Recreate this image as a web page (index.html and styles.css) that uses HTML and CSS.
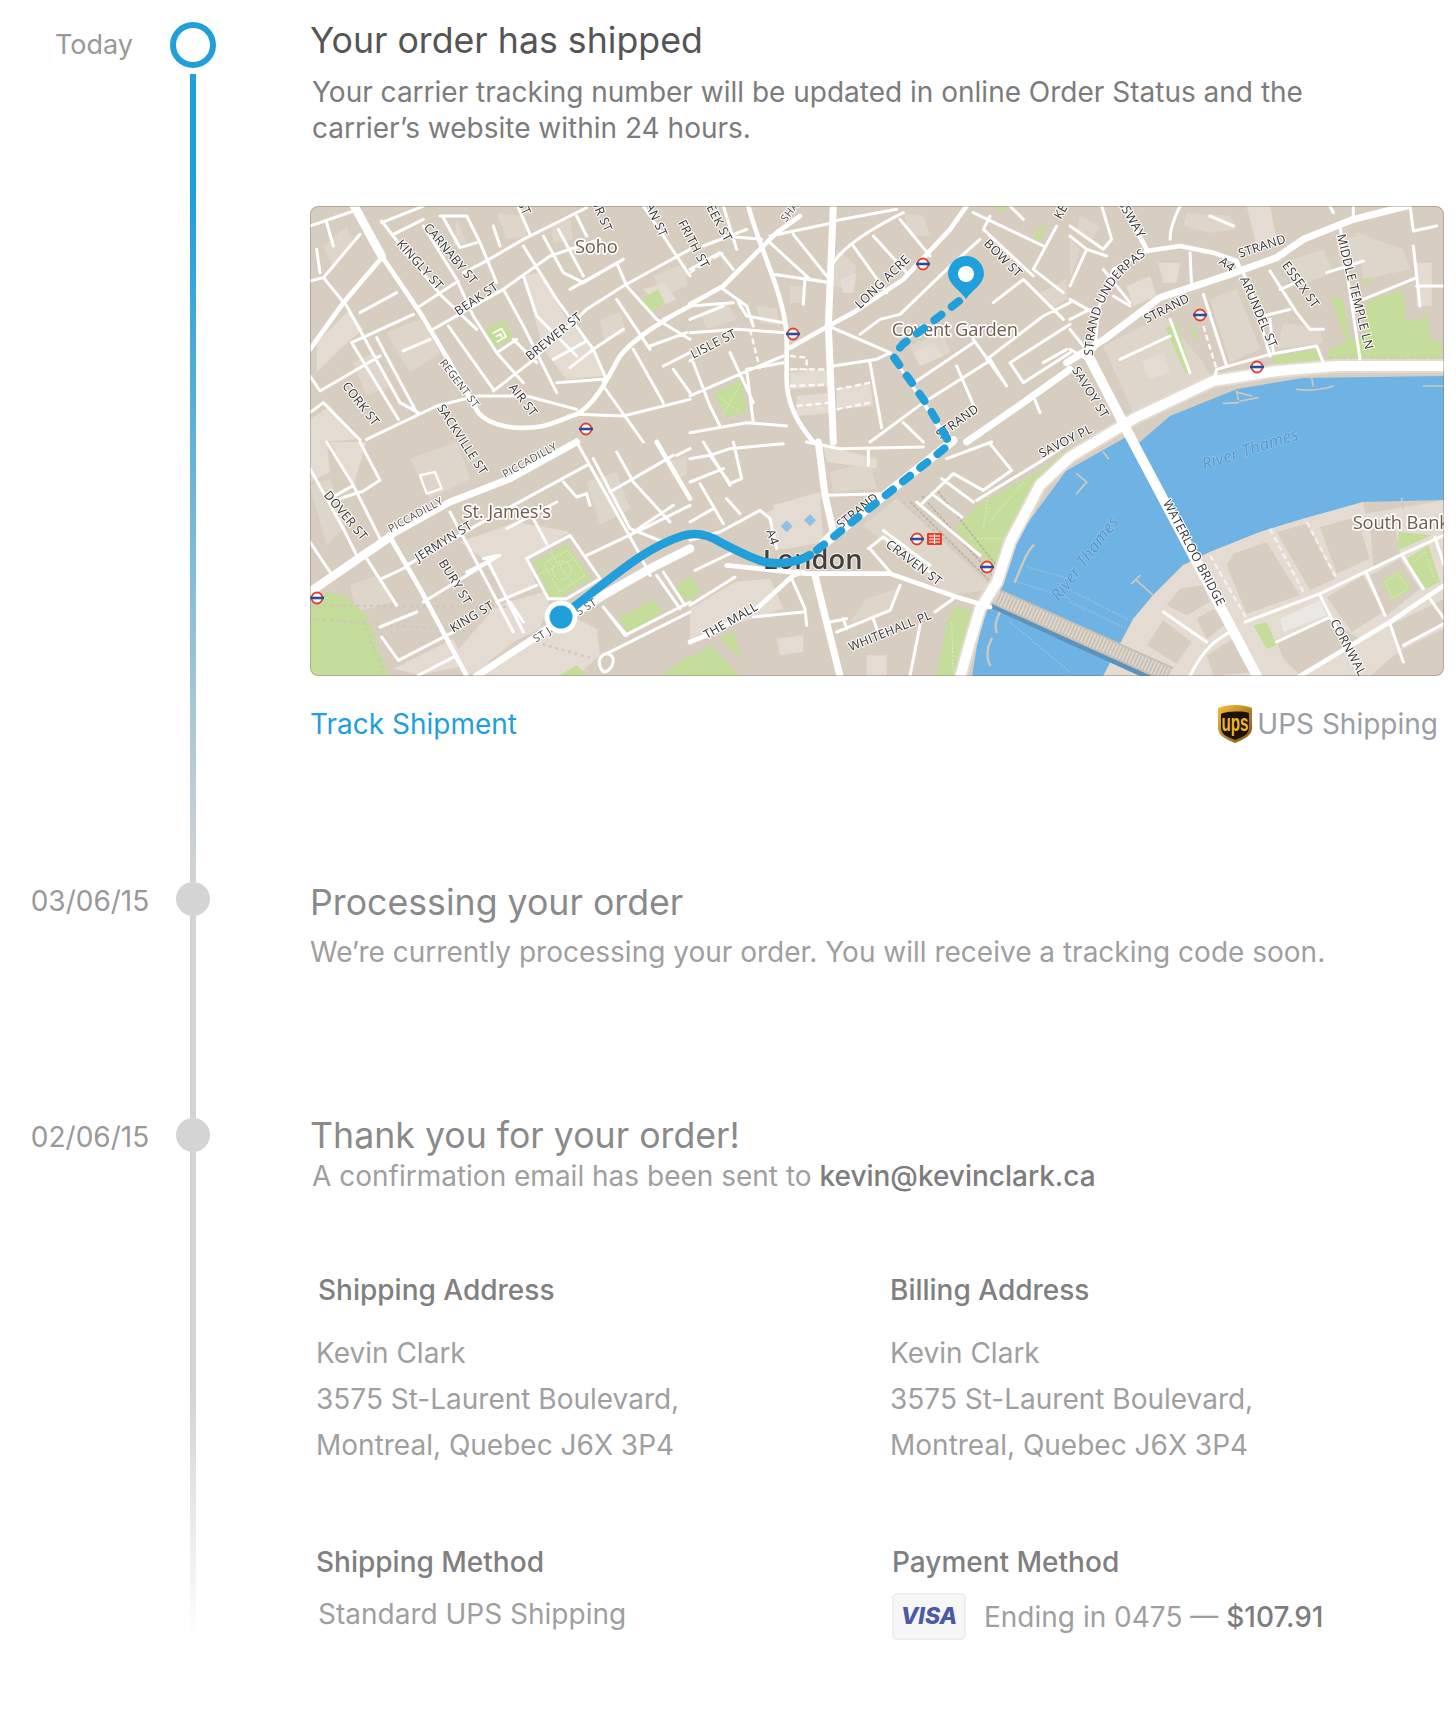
FILE: index.html
```html
<!DOCTYPE html>
<html lang="en">
<head>
    <meta charset="UTF-8">
    <meta name="viewport" content="width=device-width, initial-scale=1.0">
    <title>Order Status</title>
    <link rel="stylesheet" href="styles.css">
</head>
<body>
    <div class="timeline">

        <div class="step step-shipped">
            <div class="date date-today">Today</div>
            <div class="rail">
                <span class="ring"></span>
                <span class="line line-active"></span>
            </div>
            <div class="content">
                <h2 class="title title-dark">Your order has shipped</h2>
                <p class="text text-dark">Your carrier tracking number will be updated in online Order Status and the carrier’s website within 24 hours.</p>

                <div class="map">
                    <svg class="map-svg" viewBox="0 0 1134 470" width="1134" height="470">
                        <!-- each tile is drawn at 3x, in its own coordinates -->
                        <g transform="scale(.33333)">
                            <path class="tone" d="M40,120 L110,60 L130,110 L70,190Z M230,380 L330,340 L390,440 L300,500Z M560,20 L640,30 L650,90 L590,100Z M870,340 L930,320 L950,380 L880,400Z M1030,210 L1130,170 L1130,240 L1060,270Z M130,470 L190,440 L240,540 L170,570Z M440,40 L470,110 L430,120Z M720,50 L780,40 L790,100 L730,110Z"/>
                            <path class="light" d="M20,500 L100,420 L160,370 L120,310 L20,410Z M640,210 L690,200 L770,340 L860,440 L880,510 L770,520 L700,430Z M0,640 L60,600 L140,700 L0,710Z M1000,250 L1060,230 L1100,280 L1050,300Z"/>
                            <path class="park" d="M525,375 L580,340 L610,395 L550,430Z M990,280 L1045,250 L1065,290 L1025,320Z M775,230 L785,225 L790,240Z"/>
                            <path class="park-in" d="M548,382 L575,368 L588,392 L560,408 M558,392 L572,384 L576,394"/>
                        </g>
                        <g transform="translate(380 0) scale(.33333)">
                            <path class="tone" d="M300,240 L340,240 L340,290 L300,290Z M440,130 L500,180 L470,250 L430,240Z M640,20 L700,30 L720,90 L660,90Z M660,420 L760,380 L780,440 L690,480Z M1050,260 L1130,220 L1130,280 L1080,310Z M30,320 L110,290 L140,340 L50,370Z M200,300 L260,310 L270,360 L210,350Z"/>
                            <path class="light" d="M300,500 L420,490 L420,540 L300,550Z M440,550 L540,530 L550,600 L440,610Z M670,440 L730,410 L760,450 L690,480Z M450,220 L500,200 L490,260 L460,260Z M320,570 L420,560 L420,620 L320,630Z"/>
                            <path class="park" d="M70,565 L155,520 L170,615 L110,635Z M1030,85 L1070,50 L1055,100 L1040,105Z M920,0 L950,0 L935,25Z"/>
                            <path class="park-line" d="M85,570 L150,620 M150,535 L100,625"/>
                        </g>
                        <g transform="translate(760 0) scale(.33333)">
                            <path class="tone" d="M30,30 L90,60 L60,110 L20,80Z M350,20 L480,30 L500,70 L420,80 L340,60Z M860,80 L1000,130 L1020,190 L880,220Z M800,100 L880,90 L880,170 L810,180Z M640,170 L760,130 L790,200 L680,240Z M100,420 L280,330 L400,470 L420,510 L190,620Z M420,280 L500,250 L570,430 L480,470Z M640,350 L750,370 L760,410 L620,430Z M0,100 L30,130 L0,220Z"/>
                            <path class="light" d="M215,465 L280,440 L300,500 L235,520Z M170,240 L240,210 L260,270 L190,300Z M265,170 L330,170 L320,230 L280,230Z M530,0 L600,0 L620,100 L560,120Z M1040,170 L1085,170 L1085,300 L1040,300Z"/>
                            <path class="park" d="M610,450 L745,430 L750,470 L610,485Z M780,270 L820,280 L840,400 L885,390 L890,285 L1000,250 L1010,345 L1060,340 L1065,300 L1080,400 L1115,405 L1115,460 L770,462 L775,430 L830,410Z M285,365 L320,350 L365,500 L345,500Z M360,340 L385,395 L370,400Z M875,220 L915,215 L880,240Z"/>
                            <path class="dots" d="M780,455 L1115,455 M440,515 L600,480"/>
                        </g>
                        <g transform="translate(0 236) scale(.33333)">
                            <path class="tone" d="M0,130 L60,110 L110,250 L50,310Z M300,50 L440,0 L480,110 L360,170 L320,90Z M830,120 L920,90 L960,200 L870,250Z M1070,60 L1130,40 L1130,100 L1090,110Z M120,430 L200,400 L250,480 L140,510Z"/>
                            <path class="light" d="M450,300 L620,240 L780,270 L650,350 L680,430 L590,470 L520,350Z M560,490 L700,450 L720,470 L690,560 L610,600 L500,690 L470,700 L430,640Z M250,680 L430,590 L470,670 L330,700Z M0,0 L50,0 L60,90 L0,120Z M60,0 L170,0 L130,130Z M520,702 L700,580 L800,530 L860,560 L870,640 L800,702Z"/>
                            <path class="park" d="M0,500 L50,450 L100,460 L170,520 L235,700 L0,700Z M670,360 L770,305 L845,410 L745,470 L720,470Z M925,525 L1030,475 L1060,510 L955,575Z M1090,440 L1140,405 L1140,485 L1115,460Z M1050,700 L1140,640 L1140,700Z M745,702 L800,670 L830,702Z"/>
                            <path class="dots" d="M0,490 L610,495 M0,530 L500,570 M640,590 L850,650 M160,540 L220,690"/>
                            <path class="park-line" d="M700,365 L775,325 L825,400 L750,450Z M720,330 L800,440 M680,400 L790,350"/>
                            <circle class="park-line" cx="755" cy="385" r="28"/>
                        </g>
                        <g transform="translate(380 236) scale(.33333)">
                            <path class="tone" d="M620,170 L910,440 L780,460 L520,250Z M420,90 L540,60 L560,140 L430,150Z M530,470 L620,440 L590,510 L480,540Z"/>
                            <path class="light" d="M230,210 L390,170 L400,300 L290,320 L260,320Z M0,500 L135,420 L240,410 L280,500 L0,590Z M400,10 L560,50 L560,80 L410,60Z M250,190 L390,150 L395,170 L250,205Z M530,640 L590,640 L590,702 L530,702Z M260,590 L340,580 L340,630 L270,640Z"/>
                            <path class="park" d="M795,260 L860,190 L1060,80 L1130,20 L1140,70 L1040,150 L960,280 L920,370 L870,340Z M740,702 L770,540 L800,490 L850,510 L820,640 L800,702Z M0,405 L35,450 L0,475Z M0,650 L60,610 L150,702 L0,702Z M90,590 L130,565 L155,650Z"/>
                            <path class="pond" d="M272,253 L290,235 L308,253 L290,271Z M342,235 L360,217 L378,235 L360,253Z"/>
                            <path class="park-line" d="M900,130 L880,260 M840,290 L960,290 M1000,120 L900,240 M785,540 L790,690"/>
                            <path class="dots" d="M640,180 L880,400 M680,170 L920,400"/>
                        </g>
                        <path class="water" d="M830,236 L860,210 L927,183 L993,172 L1134,170 L1134,294 L1053,296 L993,313 L950,326 L900,346 L873,359 L843,389 L823,413 L793,470 L662,470 L667,440 L683,372 L706,333 L756,265 L818,230Z"/>
                        <g transform="translate(760 236) scale(.33333)">
                            <path class="light" d="M100,702 L190,530 L250,460 L340,370 L420,330 L570,270 L700,230 L880,180 L885,215 L1122,175 L1122,702Z"/>
                            <path class="block" d="M470,370 L490,335 L590,300 L670,430 L690,460 L530,515Z M620,270 L710,245 L795,410 L720,445Z M750,255 L860,225 L900,350 L800,395Z M290,490 L330,440 L400,430 L420,480 L350,520Z M380,530 L430,500 L470,545 L410,590Z M230,610 L280,535 L365,600 L320,665Z M770,465 L880,400 L940,510 L845,570Z M960,550 L1122,470 L1122,540 L990,620Z M620,600 L770,530 L870,590 L850,620 L690,700 L640,650Z M1000,620 L1122,560 L1122,702 L900,702 L960,650Z M900,400 L990,350 L1050,440 L950,520Z M410,640 L490,590 L550,690 L430,702Z M900,240 L970,225 L990,340 L910,380Z"/>
                            <path class="plaza" d="M630,530 L750,475 L770,520 L640,570Z"/>
                            <path class="park" d="M550,550 L590,540 L620,610 L590,620Z M935,415 L990,385 L1025,440 L965,478Z M1010,350 L1075,310 L1110,420 L1060,445Z M985,270 L1085,280 L985,325Z"/>
                            <path class="park-line" d="M945,420 L985,395 L1015,440 L968,468Z M1030,360 L1065,330 L1095,415"/>
                        </g>
                        <!-- boats, piers and the railway bridge over the water -->
                        <g transform="translate(380 236) scale(.33333)">
                            <path class="pier" d="M975,420 C1000,360 1010,330 1030,310 M905,590 C890,620 890,650 900,670 M930,510 C915,540 915,560 920,570"/>
                            <path class="chain" d="M1010,375 L1140,410 M985,420 L1140,470 M960,540 L1140,690"/>
                        </g>
                        <g transform="translate(760 0) scale(.33333)">
                            <path class="pier pier-thin" d="M680,550 C720,555 760,550 790,540 M460,592 L505,590 M510,585 L565,575 M1060,540 L1122,540 M725,515 L730,540 M500,555 L505,580 M505,560 L545,570"/>
                        </g>
                        <g transform="translate(760 236) scale(.33333)">
                            <path class="pier pier-thin" d="M20,95 L50,120 L20,155 M100,30 L115,50 M185,425 L210,400 M200,415 L250,460 M995,170 L1000,200"/>
                            <path class="chain" d="M0,445 L180,535 M0,480 L170,560"/>
                        </g>
                        <path class="rail-shadow" d="M684,394 L760,429 L857,473"/>
                        <path class="rail-bridge" d="M680,388 L760,424 L860,469"/>
                        <path class="rail-ties" d="M680,388 L760,424 L860,469"/>
                        <path class="rail-tracks" d="M600,296 L690,385 M612,290 L690,378 M625,282 L695,370"/>

                        <path class="quay" d="M825,212 L760,251 L730,279 L700,336 L687,376 L670,403 L660,436 L650,472 M825,212 L903,175 L967,165 L1027,160 L1134,160"/>
                        <path class="road-xl" d="M825,212 L760,251 L730,279 L700,336 L687,376 L670,403 L660,436 L650,472 M825,212 L903,175 L967,165 L1027,160 L1134,160"/>
                        <path class="road-xl" d="M780,153 L823,236 L947,470"/>

                        <!-- roads and street names, tile by tile -->
                        <g transform="scale(.33333)">
                            <path class="r" d="M0,60 L130,15 M40,215 L150,85 M0,225 L40,215 L110,300 M215,50 L340,0 M250,85 L340,40 M215,45 L280,130 L395,270 L500,370 M340,60 L440,220 L490,330 L560,440 L640,530 M30,555 L210,450 M125,410 L310,325 M360,375 L580,250 L720,150 L870,100 M460,200 L520,170 L640,100 L780,30 L830,5 M150,320 L260,260 M330,300 L445,225 M110,300 L270,590 L325,620 M125,410 L265,640 M170,700 L380,600 L500,570 L650,570 L800,610 M415,360 L550,550 M550,555 L660,470 L830,310 L940,240 L1140,130 M800,625 L940,630 L1140,580 M640,120 L740,280 L850,430 L885,510 L880,530 M740,530 L880,520 M580,250 L640,360 L740,560 M640,210 L680,330 L800,450 M1040,60 L1140,210 M920,170 L950,240 L1040,340 L1140,400 M700,90 L760,200 L820,230 L940,160 M780,250 L940,160 M745,70 L820,210 M550,60 L570,120 M800,30 L830,90 M625,5 L660,85 M390,30 L470,30 L510,110 L560,230 M400,35 L450,125 L500,110 M730,460 L830,405 M780,485 L850,430 L940,370 M880,540 L1000,708 M970,430 L1060,590 M920,280 L1020,430 M280,435 L360,400 M0,620 L40,590 L150,702 M560,440 L620,400 M1000,0 L1040,60 M1140,300 L1060,340 M200,395 L320,620 M1020,420 L1130,380 M1060,480 L1140,440 M1090,490 L1140,560 M0,510 L30,555 M50,50 L70,120 M20,130 L30,200 M610,400 L680,470"/>
                            <path class="r-m" d="M215,150 L330,320 L420,470 L505,620 M0,430 L100,290 L215,155 M505,620 C540,660 620,675 700,660 C740,650 780,630 800,625 C860,590 890,520 930,450 C970,400 1060,340 1140,300"/>
                            <path class="r-xl" d="M130,-5 L215,150"/>
                            <text class="place" x="795" y="140">Soho</text>
                            <text class="lbl" transform="translate(258 115) rotate(48)">KINGLY ST</text>
                            <text class="lbl" transform="translate(340 65) rotate(50)">CARNABY ST</text>
                            <text class="lbl" transform="translate(445 330) rotate(-34)">BEAK ST</text>
                            <text class="lbl" transform="translate(660 465) rotate(-39)">BREWER ST</text>
                            <text class="lbl lbl-s" transform="translate(388 470) rotate(53)">REGENT ST</text>
                            <text class="lbl" transform="translate(595 545) rotate(52)">AIR ST</text>
                            <text class="lbl" transform="translate(95 540) rotate(52)">CORK ST</text>
                            <text class="lbl" transform="translate(380 605) rotate(57)">SACKVILLE ST</text>
                            <text class="lbl lbl-end" transform="translate(885 80) rotate(66)">UR ST</text>
                            <text class="lbl lbl-end" transform="translate(1050 95) rotate(66)">AN ST</text>
                            <text class="lbl lbl-end" transform="translate(640 30) rotate(66)">ST</text>
                        </g>
                        <g transform="translate(380 0) scale(.33333)">
                            <path class="r" d="M415,360 L600,440 M430,45 L620,10 M240,90 L430,50 M425,180 C450,130 520,80 640,20 M310,85 L410,210 M240,110 L360,220 L420,230 M250,205 L420,230 M345,215 L340,295 M490,120 L590,260 M550,90 L650,200 M630,40 L720,150 M510,385 L570,340 L630,325 L770,190 L870,100 M850,20 L1060,120 M900,30 L880,70 M1030,190 L1120,260 M1000,220 L910,290 M1100,60 L1030,190 M880,70 L1030,210 M1000,220 L1120,340 M1140,290 L1060,330 L890,460 M680,525 L850,410 M540,708 L700,590 L890,470 M900,460 L950,540 M850,400 L950,540 M430,480 L560,460 L600,440 M540,470 L575,665 M0,380 L140,370 L290,380 M0,465 L50,430 M0,300 L130,290 M100,250 L170,300 L190,360 M0,340 L100,300 M0,570 L160,500 L280,450 M10,470 L60,600 L90,660 M0,680 L170,650 L290,660 M120,440 L190,590 M170,490 L190,650 M640,650 L700,708 M600,440 L780,708 M1140,355 L960,470 L1000,530 L1140,440 M1030,570 L1050,620 M105,90 L215,100 M100,0 L140,130 M40,120 L170,70 M0,190 L90,140 L130,190 M145,290 L170,330 L280,350 M170,490 L280,470 M800,480 L860,620 M700,590 L770,708 M1060,470 L1130,430 M960,0 L1000,40"/>
                            <path class="r-dash" d="M180,370 L210,490 M300,450 L350,455 L350,490 L300,490 M300,490 L420,490 M300,540 L420,535 M320,600 L420,590 M440,610 L540,590 M0,200 L100,140 M440,550 L540,530"/>
                            <path class="r-m" d="M175,0 C190,60 215,120 240,190 C270,270 290,340 290,400 L290,520 C290,590 320,650 370,708 M0,295 L100,240 L215,125 L260,80 L330,30 M300,425 L415,360 L490,320 L640,220 L780,70 L830,0"/>
                            <path class="r-l" d="M430,0 L415,360 L430,708 M830,708 L1000,590 L1140,490"/>
                            <text class="lbl" transform="translate(-37 50) rotate(62)">FRITH ST</text>
                            <text class="lbl lbl-end" transform="translate(105 110) rotate(62)">EEK ST</text>
                            <text class="lbl lbl-s" transform="translate(288 50) rotate(-52)">SHA</text>
                            <text class="lbl" transform="translate(510 310) rotate(-44)">LONG ACRE</text>
                            <text class="lbl" transform="translate(880 115) rotate(45)">BOW ST</text>
                            <text class="lbl" transform="translate(10 458) rotate(-27)">LISLE ST</text>
                            <text class="lbl" transform="translate(750 700) rotate(-36)">STRAND</text>
                            <text class="lbl" transform="translate(1112 42) rotate(-60)">KE</text>
                            <text class="place" x="605" y="390">Covent Garden</text>
                        </g>
                        <g transform="translate(760 0) scale(.33333)">
                            <path class="r" d="M95,0 L125,100 L100,130 L0,60 M0,280 L70,320 M0,240 L50,130 M0,340 L60,310 M0,370 L40,420 M300,100 C300,60 320,20 330,0 M600,195 L680,320 L720,370 L760,370 M630,250 L680,230 M580,330 L660,310 M600,340 L610,440 M400,265 L470,480 M360,140 L365,240 M500,165 L540,240 L600,450 M430,530 L440,490 L600,445 L740,420 L760,470 M880,280 L1040,215 M770,200 L880,165 M810,60 L870,460 M1020,0 L1030,75 L1100,60 M1030,120 L1050,300 M1040,240 L1122,240 M230,135 L130,190 L85,310 L75,430 M150,460 L300,390 M300,340 L360,500 M850,0 L850,30 M780,0 L790,20 M130,270 L180,300 M0,90 L50,130 L110,150 M100,190 L180,290 M0,430 L50,460 M490,60 L420,30"/>
                            <path class="r-dash" d="M400,360 L440,490"/>
                            <path class="r-m" d="M230,135 L330,120 L430,140 L500,165 L510,195 M160,0 L230,130"/>
                            <path class="r-l" d="M-10,470 L110,395 L270,275 L480,205 L620,155 L700,100 L850,40 L1010,0"/>
                            <text class="lbl" transform="translate(230 352) rotate(-27)">STRAND</text>
                            <text class="lbl" transform="translate(510 155) rotate(-18)">STRAND</text>
                            <text class="lbl" transform="translate(445 172) rotate(35)">A4</text>
                            <text class="lbl" transform="translate(510 218) rotate(67)">ARUNDEL ST</text>
                            <text class="lbl" transform="translate(635 178) rotate(54)">ESSEX ST</text>
                            <text class="lbl" transform="translate(800 88) rotate(76)">MIDDLE TEMPLE LN</text>
                            <text class="lbl" transform="translate(5 492) rotate(58)">SAVOY ST</text>
                            <text class="lbl lbl-end" transform="translate(205 98) rotate(60)">SSWAY</text>
                            <path id="underpass" class="none" d="M68,450 C75,330 110,220 230,148"/>
                            <text class="lbl"><textPath href="#underpass">STRAND UNDERPASS</textPath></text>
                        </g>
                        <g transform="translate(0 236) scale(.33333)">
                            <path class="r" d="M50,0 L130,130 L210,290 M0,80 L100,260 L140,340 M170,350 L260,490 M155,150 L210,115 L150,0 M90,170 L150,150 M420,210 L610,570 M215,410 L290,375 M290,370 L500,250 L830,70 M590,260 L740,180 M520,350 L560,340 M210,555 L320,510 M340,480 L570,340 M215,585 L265,655 L430,570 M560,480 L680,430 M325,700 L440,640 M650,350 L780,280 L870,410 L770,470 L715,470Z M760,120 L800,165 L830,155 L840,190 M670,230 L710,305 M830,340 L1000,260 L1140,190 M800,0 L980,320 L1020,400 M850,50 L960,260 L1060,300 M920,30 L970,120 L1080,240 M900,150 L1090,40 M970,270 L1090,190 M900,520 L950,580 M880,495 L945,580 L1140,480 M870,650 C880,630 900,630 910,650 C910,680 890,690 880,690 C870,680 865,660 870,650Z M890,635 L1140,510 M1040,400 L1110,500 M1060,390 L1125,490 M1100,40 L1140,20 M0,300 L60,390 M130,130 L60,170 M470,390 L570,340 M530,350 L640,570 M600,480 L640,540"/>
                            <path class="r-box" d="M330,100 L375,90 L395,140 L350,155Z"/>
                            <path class="r-m" d="M240,285 L330,440 L470,702 M1040,0 L1140,170"/>
                            <path class="r-l" d="M240,280 L420,180 L600,110 L800,0 M500,702 L700,570"/>
                            <path class="r-xl" d="M0,450 L130,360 L240,285 M700,570 L880,460 L1020,380 L1140,320"/>
                            <text class="lbl" transform="translate(40 160) rotate(50)">DOVER ST</text>
                            <text class="lbl lbl-s" transform="translate(242 272) rotate(-29)">PICCADILLY</text>
                            <text class="lbl lbl-s" transform="translate(585 108) rotate(-29)">PICCADILLY</text>
                            <text class="lbl" transform="translate(325 360) rotate(-32)">JERMYN ST</text>
                            <text class="lbl" transform="translate(385 362) rotate(58)">BURY ST</text>
                            <text class="lbl" transform="translate(430 572) rotate(-31)">KING ST</text>
                            <text class="lbl lbl-s" transform="translate(678 602) rotate(-32)">ST JAMES'S ST</text>
                            <text class="place" x="458" y="228">St. James's</text>
                        </g>
                        <g transform="translate(380 236) scale(.33333)">
                            <path class="r" d="M350,0 L450,20 L700,15 M535,20 L535,70 M0,295 L90,270 L210,205 L240,230 L260,320 M0,490 L135,405 M15,385 L130,330 M0,50 L60,40 L120,20 L280,5 M60,40 L120,125 L155,110 L130,0 M30,125 L100,245 M0,240 L70,200 M110,170 L150,215 M190,525 L340,510 M305,410 L345,500 L350,550 M440,570 L600,505 L630,430 M460,530 L470,560 M550,530 L560,560 M690,190 L790,95 L880,145 M755,110 L850,180 M725,155 L815,225 M860,175 L1050,60 L1140,0 M770,50 L905,0 M880,145 L965,85 L900,5 M535,320 L580,285 L720,390 M540,320 L600,390 M580,265 L720,370 M660,702 L690,550 M735,510 L790,470 M410,160 L580,155 M680,180 L870,340 M0,120 L100,80 M120,130 L40,0 M420,540 L470,530"/>
                            <path class="r-m" d="M0,600 L50,580 L200,500 L310,400 L340,390 M110,370 L350,395 L600,395 L800,465 L900,495"/>
                            <path class="r-l" d="M385,0 L405,160 L430,270 L400,300 M375,400 L450,702"/>
                            <path class="r-xl" d="M410,300 L570,170 L790,-5"/>
                            <text class="place place-city" x="218" y="380">London</text>
                            <text class="lbl" transform="translate(452 262) rotate(-38)">STRAND</text>
                            <text class="lbl" transform="translate(228 268) rotate(70)">A4</text>
                            <text class="lbl" transform="translate(585 312) rotate(37)">CRAVEN ST</text>
                            <text class="lbl" transform="translate(482 628) rotate(-22)">WHITEHALL PL</text>
                            <text class="lbl" transform="translate(50 592) rotate(-30)">THE MALL</text>
                            <text class="lbl" transform="translate(1055 48) rotate(-27)">SAVOY PL</text>
                        </g>
                        <g transform="translate(760 236) scale(.33333)">
                            <path class="r" d="M525,540 L750,455 L1000,335 L1122,280 M750,460 L860,680 M890,395 L945,520 M1000,345 L1060,440 M960,545 L1000,660 M1080,470 L1122,530 M1000,610 L1122,545 M1095,285 L1122,370 M620,600 L780,525 M360,702 C400,620 440,590 490,565 M280,510 L410,600"/>
                            <path class="r-dash r-faint" d="M600,260 L700,450 M710,240 L800,410 M420,340 L530,530"/>
                            <path class="r-m" d="M690,702 L960,540 L1122,430"/>
                            <text class="lbl" transform="translate(278 182) rotate(62)">WATERLOO BRIDGE</text>
                            <text class="lbl" transform="translate(780 540) rotate(62)">CORNWAL</text>
                            <text class="place" x="848" y="262">South Bank</text>
                        </g>
                        <text class="river" transform="translate(894 264) rotate(-18)">River Thames</text>
                        <text class="river" transform="translate(749 396) rotate(-53)">River Thames</text>

                        <!-- underground roundels -->
                        <g class="tube">
                            <g transform="translate(276 223)"><circle r="5.5"/><path d="M-7,0 H7"/></g>
                            <g transform="translate(613 58)"><circle r="5.5"/><path d="M-7,0 H7"/></g>
                            <g transform="translate(483 128)"><circle r="5.5"/><path d="M-7,0 H7"/></g>
                            <g transform="translate(890 109)"><circle r="5.5"/><path d="M-7,0 H7"/></g>
                            <g transform="translate(947 161)"><circle r="5.5"/><path d="M-7,0 H7"/></g>
                            <g transform="translate(7 392)"><circle r="5.5"/><path d="M-7,0 H7"/></g>
                            <g transform="translate(607 333)"><circle r="5.5"/><path d="M-7,0 H7"/></g>
                            <g transform="translate(677 361)"><circle r="5.5"/><path d="M-7,0 H7"/></g>
                        </g>
                        <g transform="translate(617 327)">
                            <rect class="rail-sign" width="15" height="12" rx="1"/>
                            <path class="rail-mark" d="M2,3 H13 M2,6 H13 M2,9 H13 M7.5,1 V11"/>
                        </g>

                        <!-- route -->
                        <path class="route" d="M251,411 L283,386 C310,365 340,340 372,330 C385,326 397,328 410,336 C425,344 440,352 455,356 C470,359 488,356 500,349"/>
                        <path class="route route-dash" d="M507,344 L640,238 L618,200 L583,150 L593,138 L613,123 L653,92"/>
                        <circle class="start-ring" cx="251" cy="411" r="16.5"/>
                        <circle class="start-dot" cx="251" cy="411" r="11.5"/>
                        <path class="pin" d="M656,93 C650,84 638,78 638,68 A18,18 0 1 1 674,68 C674,78 662,84 656,93Z"/>
                        <circle class="pin-eye" cx="656" cy="68" r="8"/>
                        <rect class="map-edge" x=".5" y=".5" width="1133" height="469" rx="8"/>
                    </svg>
                </div>

                <div class="track-row">
                    <a class="track-link" href="#">Track Shipment</a>
                    <span class="carrier">
                        <svg class="ups-logo" viewBox="0 0 34 38" width="34" height="38">
                            <defs>
                                <linearGradient id="upsGold" x1="0" y1="0" x2="1" y2="1">
                                    <stop offset="0" stop-color="#f5bf3a"/>
                                    <stop offset="1" stop-color="#7d5210"/>
                                </linearGradient>
                            </defs>
                            <path fill="url(#upsGold)" d="M17,0 C24,0 29,1 34,3 V23 C34,30 27,34 17,38 C7,34 0,30 0,23 V3 C5,1 10,0 17,0Z"/>
                            <path fill="#1d1207" d="M3,9 C9,6 25,6 31,8 V23 C31,29 25,32 17,35 C9,32 3,29 3,23Z"/>
                            <text class="ups-text" x="3.5" y="26" textLength="27" lengthAdjust="spacingAndGlyphs">ups</text>
                        </svg>
                        UPS Shipping
                    </span>
                </div>
            </div>
        </div>

        <div class="step step-processing">
            <div class="date date-dated">03/06/15</div>
            <div class="rail">
                <span class="dot"></span>
                <span class="line"></span>
            </div>
            <div class="content">
                <h2 class="title">Processing your order</h2>
                <p class="text text-single">We’re currently processing your order. You will receive a tracking code soon.</p>
            </div>
        </div>

        <div class="step">
            <div class="date date-dated">02/06/15</div>
            <div class="rail">
                <span class="dot"></span>
                <span class="line line-fade"></span>
            </div>
            <div class="content">
                <h2 class="title title-tight">Thank you for your order!</h2>
                <p class="text text-confirm">A confirmation email has been sent to <strong>kevin@kevinclark.ca</strong></p>

                <div class="details">
                    <div class="block">
                        <h3 class="block-head head-shift">Shipping Address</h3>
                        <p class="address">Kevin Clark<br>3575 St-Laurent Boulevard,<br>Montreal, Quebec J6X 3P4</p>
                    </div>
                    <div class="block">
                        <h3 class="block-head">Billing Address</h3>
                        <p class="address">Kevin Clark<br>3575 St-Laurent Boulevard,<br>Montreal, Quebec J6X 3P4</p>
                    </div>
                    <div class="block">
                        <h3 class="block-head">Shipping Method</h3>
                        <p class="method">Standard UPS Shipping</p>
                    </div>
                    <div class="block block-pay">
                        <h3 class="block-head">Payment Method</h3>
                        <div class="payment">
                            <span class="card">VISA</span>
                            <span>Ending in 0475 — <strong>$107.91</strong></span>
                        </div>
                    </div>
                </div>
            </div>
        </div>

    </div>
</body>
</html>
```

FILE: styles.css
```css
body {
    margin: 0;
    background-color: #ffffff;
    font-family: Inter, "Liberation Sans", sans-serif;
    color: #9f9f9f;
}

.timeline {
    padding: 22px 12px 40px 0;
}

.step {
    display: grid;
    grid-template-columns: 170px 46px 1fr;
}

.date {
    padding-left: 10px;
    font-size: 28px;
    line-height: 34px;
    text-align: center;
    color: #999;
}

.date-dated {
    padding-top: 2px;
}

.date-today {
    padding-left: 18px;
    font-size: 27px;
    line-height: 46px;
}

.rail {
    display: flex;
    flex-direction: column;
    align-items: center;
}

.ring {
    box-sizing: border-box;
    width: 46px;
    height: 46px;
    border: 6px solid #219fdb;
    border-radius: 50%;
    margin-bottom: 6px;
}

.dot {
    width: 34px;
    height: 34px;
    border-radius: 50%;
    background-color: #d4d4d4;
}

.line {
    flex: 1;
    width: 6px;
    background-color: #d4d4d4;
}

.line-active {
    background: linear-gradient(#219fdb 15%, #d4d4d4 100%);
}

.line-fade {
    background: linear-gradient(#d4d4d4 50%, #ffffff 100%);
}

.content {
    padding-left: 94px;
    min-width: 0;
}

.title {
    margin: 0;
    font-size: 35.7px;
    font-weight: 400;
    line-height: 40px;
    color: #8a8a8a;
}

.title-dark {
    line-height: 36px;
    color: #555;
}

.title-tight {
    line-height: 34px;
}

.text {
    margin: 0;
    font-size: 28px;
    line-height: 36px;
    color: #9f9f9f;
}

.text-dark {
    max-width: 1060px;
    margin-top: 16px;
    padding-left: 2px;
    color: #7c7c7c;
}

.text-single {
    margin-top: 12px;
    padding-bottom: 148px;
}

.text-confirm {
    margin-top: 6px;
    padding-left: 2px;
}

.text strong,
.payment strong {
    font-weight: 500;
    color: #7d7d7d;
}

/* map */

.map {
    width: 1134px;
    height: 470px;
    margin-top: 60px;
    border-radius: 8px;
    overflow: hidden;
    background-color: #d8cdc1;
}

.map-svg {
    display: block;
    filter: blur(0.45px);
}

.map-edge {
    fill: none;
    stroke: rgba(110, 95, 80, 0.35);
}

.tone { fill: #dfd6cb; }
.light { fill: #e4dcd3; }
.block { fill: #d8cdc1; }
.plaza { fill: #eae8e3; }
.park { fill: #c5dd9a; }
.pond { fill: #8fc0e8; }
.water { fill: #6fb3e5; }
.none { fill: none; }

.park-in {
    fill: none;
    stroke: #ffffff;
    stroke-width: 5;
}

.park-line {
    fill: none;
    stroke: #dcebc4;
    stroke-width: 3;
    stroke-dasharray: 6 5;
}

.dots {
    fill: none;
    stroke: #cfc6bb;
    stroke-width: 7;
    stroke-dasharray: 8 12;
}

.r, .r-dash, .r-m, .r-l, .r-xl, .r-box, .road-xl, .quay {
    fill: none;
    stroke: #ffffff;
    stroke-linecap: round;
    stroke-linejoin: round;
}

.r { stroke-width: 9; }
.r-m { stroke-width: 14; }
.r-l { stroke-width: 21; }
.r-xl { stroke-width: 26; }
.r-box { stroke-width: 7; stroke-dasharray: 12 3; }
.road-xl { stroke-width: 10; }
.quay { stroke: #e4dcd3; stroke-width: 14; }

.r-dash {
    stroke-width: 7;
    stroke-dasharray: 18 10;
    stroke-linecap: butt;
    opacity: 0.9;
}

.r-faint {
    opacity: 0.6;
}

.pier {
    fill: none;
    stroke: #cfc8bd;
    stroke-width: 7;
    stroke-linecap: round;
}

.pier-thin { stroke-width: 5; }

.chain {
    fill: none;
    stroke: #98bedd;
    stroke-width: 5;
    stroke-dasharray: 5 5;
}

.rail-shadow {
    fill: none;
    stroke: #5c93bd;
    stroke-width: 17;
}

.rail-bridge {
    fill: none;
    stroke: #c9c0b5;
    stroke-width: 17;
}

.rail-ties {
    fill: none;
    stroke: #e2dbd2;
    stroke-width: 13;
    stroke-dasharray: 1.5 2;
}

.rail-tracks {
    fill: none;
    stroke: #b9aea3;
    stroke-width: 1.5;
    stroke-dasharray: 3 1.5;
}

.lbl, .place, .river {
    font-family: "Open Sans", "Noto Sans", sans-serif;
    paint-order: stroke;
    stroke-linejoin: round;
}

.lbl {
    font-size: 37px;
    letter-spacing: 1px;
    fill: #333333;
    stroke: rgba(255, 255, 255, 0.9);
    stroke-width: 7;
}

.lbl-s {
    font-size: 32px;
    fill: #4d4d4d;
}

.lbl-end {
    text-anchor: end;
}

.place {
    font-size: 55px;
    letter-spacing: -0.5px;
    fill: #6c5d4e;
    stroke: #ffffff;
    stroke-width: 10;
}

.place-city {
    font-size: 82px;
    font-weight: 600;
    letter-spacing: 0;
    fill: #404040;
    stroke: rgba(255, 255, 255, 0.7);
    stroke-width: 6;
}

.river {
    font-size: 16.5px;
    font-style: italic;
    letter-spacing: 0.3px;
    fill: #5a97c8;
    stroke: #8ac3ec;
    stroke-width: 1.5;
}

.tube circle {
    fill: #ffffff;
    stroke: #e2402f;
    stroke-width: 1.8;
}

.tube path {
    fill: none;
    stroke: #254e9c;
    stroke-width: 2.6;
}

.rail-sign { fill: #e2402f; }

.rail-mark {
    fill: none;
    stroke: #ffffff;
    stroke-width: 1;
}

.route {
    fill: none;
    stroke: #219fdb;
    stroke-width: 8.5;
    stroke-linecap: round;
    stroke-linejoin: round;
}

.route-dash {
    stroke-width: 8;
    stroke-dasharray: 9 13;
}

.start-ring { fill: #ffffff; }
.start-dot { fill: #219fdb; }
.pin { fill: #219fdb; }
.pin-eye { fill: #ffffff; }

/* below the map */

.track-row {
    display: flex;
    justify-content: space-between;
    align-items: center;
    height: 36px;
    margin-top: 30px;
    padding: 0 6px 140px 0;
    font-size: 28px;
}

.track-link {
    color: #219fdb;
    text-decoration: none;
}

.carrier {
    display: flex;
    align-items: center;
    gap: 5px;
    color: #9a9ea5;
}

.ups-text {
    font-family: "Liberation Sans", sans-serif;
    font-size: 23px;
    font-weight: bold;
    fill: #f0b429;
}

/* order details */

.details {
    display: grid;
    grid-template-columns: 574px 1fr;
    row-gap: 79px;
    margin-top: 81px;
    padding-left: 6px;
}

.block-head {
    margin: 0;
    font-size: 28px;
    font-weight: 500;
    line-height: 30px;
    color: #808080;
}

.head-shift {
    padding-left: 2px;
}

.address {
    margin: 25px 0 0;
    font-size: 28px;
    line-height: 46px;
}

.method {
    margin: 19px 0 0;
    padding-left: 2px;
    font-size: 28px;
    line-height: 36px;
}

.block-pay {
    padding-left: 2px;
}

.payment {
    display: flex;
    align-items: center;
    gap: 18px;
    margin-top: 16px;
    font-size: 28px;
}

.card {
    box-sizing: border-box;
    width: 74px;
    height: 47px;
    border: 2px solid #eeeeee;
    border-radius: 5px;
    background-color: #f7f7f8;
    font-size: 23px;
    font-weight: 800;
    font-style: italic;
    line-height: 43px;
    text-align: center;
    color: #4a5aa8;
}
```
